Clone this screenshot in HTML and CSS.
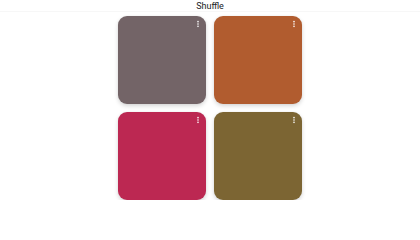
FILE: index.html
```html
<!DOCTYPE html>
<html>
<head>
<meta charset="utf-8">
<link rel="stylesheet" href="styles.css">
</head>
<body>
<header class="topbar"><span class="title">Shuffle</span></header>
<main class="grid">
  <div class="card c1"><svg class="more" viewBox="0 0 24 24"><circle cx="12" cy="5" r="2.4"/><circle cx="12" cy="12" r="2.4"/><circle cx="12" cy="19" r="2.4"/></svg></div>
  <div class="card c2"><svg class="more" viewBox="0 0 24 24"><circle cx="12" cy="5" r="2.4"/><circle cx="12" cy="12" r="2.4"/><circle cx="12" cy="19" r="2.4"/></svg></div>
  <div class="card c3"><svg class="more" viewBox="0 0 24 24"><circle cx="12" cy="5" r="2.4"/><circle cx="12" cy="12" r="2.4"/><circle cx="12" cy="19" r="2.4"/></svg></div>
  <div class="card c4"><svg class="more" viewBox="0 0 24 24"><circle cx="12" cy="5" r="2.4"/><circle cx="12" cy="12" r="2.4"/><circle cx="12" cy="19" r="2.4"/></svg></div>
</main>
</body>
</html>
```
FILE: styles.css
```css
html, body {
  margin: 0;
  padding: 0;
  background: #ffffff;
  font-family: Roboto, "Noto Sans", sans-serif;
}
.topbar {
  height: 12px;
  display: flex;
  align-items: center;
  justify-content: center;
  border-bottom: 0.5px solid rgba(0, 0, 0, 0.03);
  box-sizing: border-box;
}
.title {
  font-size: 9px;
  color: #202124;
  line-height: 12px;
}
.grid {
  display: grid;
  grid-template-columns: 88px 88px;
  grid-auto-rows: 88px;
  gap: 8px;
  justify-content: center;
  padding-top: 4px;
}
.card {
  border-radius: 9px;
  display: flex;
  justify-content: flex-end;
  align-items: flex-start;
  padding: 4px 4px 0 0;
  box-shadow: 0 2px 4px rgba(0, 0, 0, 0.16), 0 0 2px rgba(0, 0, 0, 0.05);
}
.more {
  width: 8px;
  height: 8px;
  fill: #ffffff;
}
.c1 { background: #736467; }
.c2 { background: #b15c2f; }
.c3 { background: #bc2852; }
.c4 { background: #7c6533; }
```
